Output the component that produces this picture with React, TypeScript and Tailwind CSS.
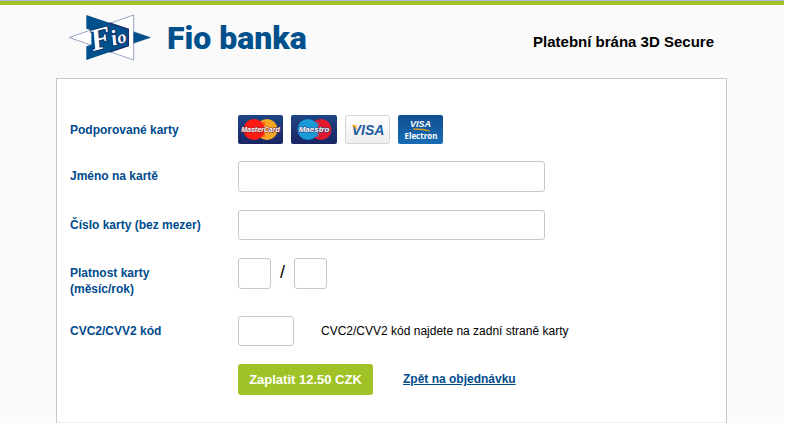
import React from 'react';

const FioMark: React.FC = () => (
    <svg viewBox="57 42 246 141" className="h-[47px] w-[82px] shrink-0" aria-hidden="true">
        <path d="M251 45 58 112.5 251 180Z" fill="#fff" stroke="#6478a8" strokeWidth="2" />
        <path d="M109 45 235 88V137L109 180V139L124 134V91L109 86Z" fill="#00508c" />
        <path d="M251 95 302 112.5 251 130Z" fill="#00508c" stroke="#1c3f7a" strokeWidth="1" />
        <path d="M178 69 235 88V137L178 156" fill="none" stroke="#14306e" strokeWidth="4" />
        <text
            x="129"
            y="153"
            transform="rotate(-15 129 153)"
            fill="#fff"
            stroke="#0b2a66"
            strokeWidth="5"
            paintOrder="stroke"
            fontWeight="700"
            fontStyle="italic"
            fontFamily="'Liberation Serif', serif"
        >
            <tspan fontSize="92">F</tspan>
            <tspan fontSize="66">i</tspan>
            <tspan fontSize="54">o</tspan>
        </text>
    </svg>
);

const MasterCard: React.FC = () => (
    <svg viewBox="0 0 46 29" className="h-[29px] w-[46px]" role="img" aria-label="MasterCard">
        <defs>
            <linearGradient id="mc" x1="0" y1="0" x2="0" y2="1">
                <stop offset="0" stopColor="#1d4585" />
                <stop offset="1" stopColor="#1a2663" />
            </linearGradient>
        </defs>
        <rect width="45" height="29" rx="2" fill="url(#mc)" />
        <circle cx="29" cy="14.5" r="10.5" fill="#f5a623" />
        <circle cx="16" cy="14.5" r="10.5" fill="#ff1a14" />
        <path d="M22 8h5M24 10h3M24 19h3M22 21h5" stroke="#ff1a14" />
        <text x="22.5" y="17" textAnchor="middle" fontSize="7" fontWeight="700" fontStyle="italic" fill="#fff" stroke="#7a2430" strokeWidth="1" paintOrder="stroke" fontFamily="'Liberation Sans', sans-serif">
            MasterCard
        </text>
    </svg>
);

const Maestro: React.FC = () => (
    <svg viewBox="0 0 46 29" className="h-[29px] w-[46px]" role="img" aria-label="Maestro">
        <defs>
            <linearGradient id="ms" x1="0" y1="0" x2="0" y2="1">
                <stop offset="0" stopColor="#1d4585" />
                <stop offset="1" stopColor="#1a2663" />
            </linearGradient>
        </defs>
        <rect width="46" height="29" rx="2" fill="url(#ms)" />
        <circle cx="30" cy="14.5" r="10.5" fill="#e2192c" />
        <circle cx="17" cy="14.5" r="10.5" fill="#1a9ad6" />
        <path d="M23 8h5M25 10h3M25 19h3M23 21h5" stroke="#1a9ad6" />
        <text x="23" y="17" textAnchor="middle" fontSize="8" fontWeight="700" fontStyle="italic" fill="#fff" stroke="#29407c" strokeWidth="1" paintOrder="stroke" fontFamily="'Liberation Sans', sans-serif">
            Maestro
        </text>
    </svg>
);

const Visa: React.FC = () => (
    <svg viewBox="0 0 46 29" className="h-[29px] w-[46px]" role="img" aria-label="Visa">
        <defs>
            <linearGradient id="vs" x1="0" y1="0" x2="0" y2="1">
                <stop offset="0" stopColor="#fff" />
                <stop offset="1" stopColor="#eeeeee" />
            </linearGradient>
        </defs>
        <rect x="1.5" y="0.5" width="44" height="28" rx="2" fill="url(#vs)" stroke="#d4d4d4" />
        <text x="24" y="20" textAnchor="middle" fontSize="14" fontWeight="700" fontStyle="italic" fill="#1c5a9e" fontFamily="'Liberation Sans', sans-serif">
            VISA
        </text>
        <path d="M7 10h4q1 0 1.2 1l1 5Q11 12 7 10Z" fill="#f5a81c" />
    </svg>
);

const VisaElectron: React.FC = () => (
    <svg viewBox="0 0 46 29" className="h-[29px] w-[46px]" role="img" aria-label="Visa Electron">
        <defs>
            <linearGradient id="ve" x1="0" y1="0" x2="0" y2="1">
                <stop offset="0" stopColor="#0f4f90" />
                <stop offset="1" stopColor="#1a6cb4" />
            </linearGradient>
        </defs>
        <rect x="1" width="45" height="29" rx="2" fill="url(#ve)" />
        <g fill="#fff" fontWeight="700" textAnchor="middle">
            <text x="23.5" y="12" fontSize="9" fontStyle="italic" fontFamily="'Liberation Sans', sans-serif">VISA</text>
            <text x="24" y="24" fontSize="8" fontFamily="'Open Sans', sans-serif">Electron</text>
        </g>
        <path d="M16 14Q26 13 33 16Q25 14.5 16 14Z" fill="#f5a81c" stroke="#f5a81c" strokeWidth="0.6" />
    </svg>
);

const fieldClass = 'block rounded-[3px] border border-[#c8c8c8] bg-white px-2 text-sm outline-none';
const labelClass = 'w-[168px] shrink-0 pt-[7px] font-bold text-[#004b8d]';

const App: React.FC = () => (
    <div className="min-h-screen border-r border-white bg-[#fafafa] font-['Liberation_Sans',Arial,sans-serif] text-xs leading-4 text-black">
        <div className="border-t border-[#a9b9d0] bg-[#a0c226] pt-1" />

        <div className="pr-px">
            <div className="mx-auto max-w-[671px]">
                <header className="flex h-[73px] items-start justify-between px-[13px] pt-[9px]">
                    <div className="flex items-start gap-4">
                        <FioMark />
                        <span className="pt-1 font-[Roboto,sans-serif] text-[32px] leading-10 font-black text-[#00508c]">
                            Fio banka
                        </span>
                    </div>
                    <h1 className="pt-5 text-[15px] leading-4 font-bold">Platební brána 3D Secure</h1>
                </header>

                <main className="border border-[#c8c8c8] bg-white">
                    <form
                        className="flex flex-col gap-[18px] border-b border-[#eeeeee] px-[13px] pt-9 pb-[27px]"
                        onSubmit={(e) => e.preventDefault()}
                    >
                        <div className="flex h-7">
                            <span className={labelClass}>Podporované karty</span>
                            <div className="flex gap-[7px]">
                                <MasterCard />
                                <Maestro />
                                <Visa />
                                <VisaElectron />
                            </div>
                        </div>

                        <div className="flex">
                            <label htmlFor="name" className={labelClass}>Jméno na kartě</label>
                            <input id="name" type="text" className={`${fieldClass} h-[31px] w-[307px]`} />
                        </div>

                        <div className="flex">
                            <label htmlFor="number" className={labelClass}>Číslo karty (bez mezer)</label>
                            <input id="number" type="text" className={`${fieldClass} h-[30px] w-[307px]`} />
                        </div>

                        <div className="flex h-10 items-start">
                            <label htmlFor="month" className={labelClass}>
                                Platnost karty
                                <br />
                                (měsíc/rok)
                            </label>
                            <input id="month" type="text" maxLength={2} className={`${fieldClass} h-[31px] w-[33px]`} />
                            <span className="w-[23px] text-center text-lg leading-7">/</span>
                            <input type="text" maxLength={2} aria-label="Rok" className={`${fieldClass} h-[31px] w-[33px]`} />
                        </div>

                        <div className="flex">
                            <label htmlFor="cvc" className={labelClass}>CVC2/CVV2 kód</label>
                            <input id="cvc" type="text" maxLength={3} className={`${fieldClass} h-[30px] w-14`} />
                            <span className="pt-[7px] pl-[27px]">CVC2/CVV2 kód najdete na zadní straně karty</span>
                        </div>

                        <div className="flex items-start gap-[30px] pl-[168px]">
                            <button type="submit" className="h-[31px] w-[135px] rounded-[3px] bg-[#a0c226] text-[13px] font-bold text-white">
                                Zaplatit 12.50 CZK
                            </button>
                            <a href="#" className="pt-[7px] font-bold text-[#004b8d] underline">Zpět na objednávku</a>
                        </div>
                    </form>
                </main>
            </div>
        </div>
    </div>
);

export default App;
